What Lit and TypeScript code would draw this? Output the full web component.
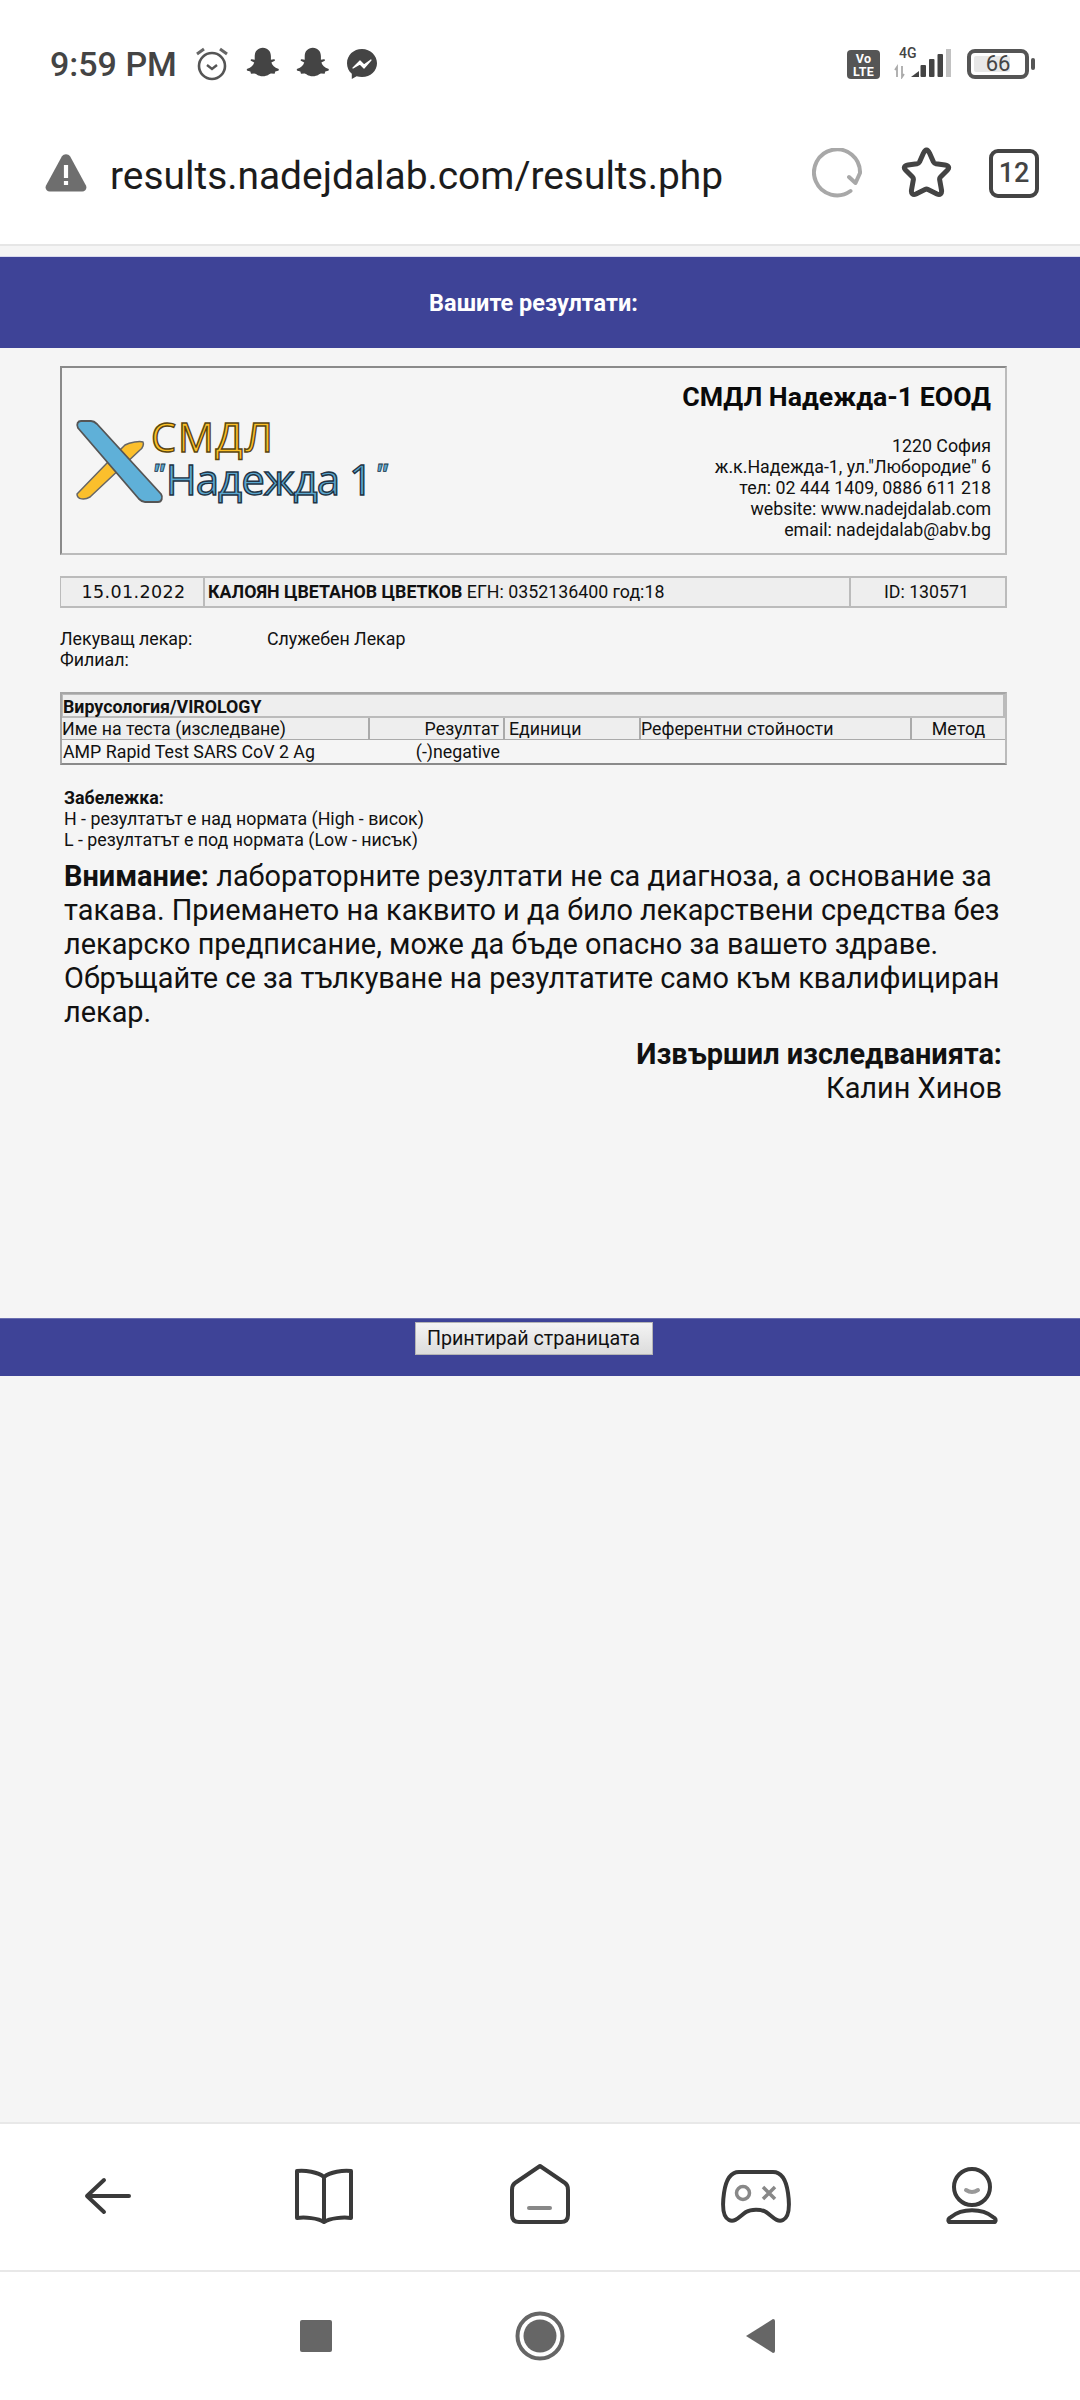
import { LitElement, html, css, svg } from "lit";
import { customElement } from "lit/decorators.js";

const ghost = svg`<path d="M12 2.500c-3 0-5 2.200-5 5.200v2.200l-1.800-.4c-.7 0-1 .8-.3 1.200l1.800.9c-.5 1.800-2 3.200-4.200 3.900-.6.2-.5 1 .1 1.200l1.700.5.4 1.300 2-.2c1.200 0 2.300 1.700 5.300 1.700s4.100-1.700 5.300-1.700l2 .2.4-1.300 1.700-.5c.6-.2.7-1 .1-1.200-2.200-.7-3.700-2.100-4.200-3.900l1.800-.9c.7-.4.4-1.200-.3-1.200l-1.800.4V7.700c0-3-2-5.200-5-5.200z" fill="#444"/>`;

@customElement("app-root")
export class AppRoot extends LitElement {
  static styles = css`
    :host { display: block; width: 1080px; height: 2400px; font-family: Roboto, "Noto Sans", sans-serif; color: #111; background: #f5f5f5; }
    .page { display: flex; flex-direction: column; height: 2400px; }
    svg { display: block; flex: none; }

    .top { background: #fff; border-bottom: 2px solid #e6e6e6; }
    .status { height: 130px; display: flex; align-items: center; padding: 0 45px 2px 50px; box-sizing: border-box; }
    .time { font-size: 34px; font-weight: 500; color: #444; margin-right: 18px; white-space: nowrap; }
    .sicons { display: flex; gap: 16px; align-items: center; }
    .sright { margin-left: auto; display: flex; align-items: center; }
    .volte { width: 33px; height: 29px; background: #555; color: #fff; border-radius: 4px; font-size: 12.5px; font-weight: 700; line-height: 13px; text-align: center; padding-top: 2px; box-sizing: border-box; margin-right: 14px; letter-spacing: .3px; }
    .sig { position: relative; width: 57px; height: 30px; margin-right: 16px; }
    .sig span { position: absolute; left: 5px; top: -4px; font-size: 14px; font-weight: 500; color: #444; }
    .batt { width: 62px; height: 30px; border: 4px solid #555; border-radius: 8px; box-sizing: border-box; position: relative; font-size: 22px; line-height: 22px; color: #444; text-align: center; }
    .batt i { position: absolute; left: 3px; top: 3px; bottom: 3px; width: 36px; background: #e8e8e8; border-radius: 2px; }
    .batt span { position: relative; }
    .cap { width: 4px; height: 12px; background: #555; border-radius: 2px; margin-left: 2px; }

    .url { height: 114px; display: flex; align-items: center; padding: 0 41px 28px 45px; box-sizing: border-box; }
    .addr { font-size: 38.900px; margin-left: 23px; padding-top: 5px; color: #1c1c1c; flex: 1; white-space: nowrap; }
    .ubtns { display: flex; align-items: center; }
    .tabs { width: 50px; height: 49px; border: 4px solid #444; border-radius: 9px; box-sizing: border-box; font-size: 27px; font-weight: 500; color: #444; display: flex; align-items: center; justify-content: center; margin-left: 37px; }
    .star { margin-left: 38px; }

    main { flex: 1; padding-top: 10px; }
    .band { background: #3e4397; height: 92px; display: flex; align-items: center; justify-content: center; color: #fff; font-weight: 700; font-size: 23.500px; padding-right: 13px; border-top: 1px solid #d8d9ee; box-sizing: border-box; }
    .doc { margin: 0 73px 0 60px; font-size: 17.800px; line-height: 21px; color: #111; }
    .head { margin-top: 18px; height: 189px; border: 2px solid; border-color: #8a8a8a #bbb #bbb #8a8a8a; box-sizing: border-box; display: flex; justify-content: space-between; padding: 0 14px 0 8px; }

    .logo { display: flex; align-items: flex-start; margin-top: 47px; height: 100px; }
    .mark { margin-right: -14px; }
    .wm { font-family: "Open Sans", sans-serif; padding-top: 2px; white-space: nowrap; }
    .wm1 { font-size: 40px; line-height: 40px; color: #fcc028; -webkit-text-stroke: 1.400px #5a4510; letter-spacing: 1.700px; }
    .wm2 { font-size: 42px; line-height: 44px; color: #5aa7cf; -webkit-text-stroke: 1.400px #234; letter-spacing: -1px; }
    .q { font-size: 28px; line-height: 0; font-style: italic; font-weight: 700; vertical-align: 10px; -webkit-text-stroke: .8px #234; letter-spacing: 0; }
    .q.a { margin-right: 1px; margin-left: 1px; }
    .q.b { margin-left: 3px; }

    .co { text-align: right; }
    .co h1 { margin: 13px 0 22px; font-size: 26.700px; line-height: 32px; font-weight: 700; color: #0a0a0a; }

    .info { margin-top: 21px; display: grid; grid-template-columns: 142px 646px 158px; height: 32px; background: #eee; border: solid #bbb; border-width: 2px 2px 2px 1px; box-sizing: border-box; align-items: center; line-height: 28px; }
    .info > div { height: 28px; border-left: 2px solid #bbb; padding-left: 3px; box-sizing: border-box; }
    .info > div:first-child { border-left: none; text-align: center; font-family: "DejaVu Sans", sans-serif; font-size: 17.500px; letter-spacing: .4px; padding: 0 0 0 3px; }
    .info > div:last-child { text-align: center; padding: 0 5px 0 0; }

    .doctor { margin-top: 20px; display: grid; grid-template-columns: 207px 1fr; }

    .tbl { margin-top: 22px; border: 2px solid; border-color: #a6a6a6 #bbb #8a8a8a #a6a6a6; box-sizing: border-box; height: 73px; }
    .sect { height: 24px; background: #eee; font-weight: 700; line-height: 23px; padding-left: 0; border: 1px solid #bbb; border-width: 1px 2px 2px 1px; box-sizing: border-box; }
    .row { display: grid; grid-template-columns: 308px 135px 136px 271px 1fr; }
    .row.h { height: 22px; background: #eee; border-bottom: 1px solid #aaa; box-sizing: border-box; }
    .row.h > div { border-right: 2px solid #aaa; line-height: 21px; }
    .row.h > div:last-child { border-right: none; }
    .row.d { height: 23px; line-height: 23px; padding-left: 1px; }
    .right { text-align: right; padding-right: 4px; }
    .ctr { text-align: center; }
    .pad { padding-left: 4px; }
    .neg { text-align: right; padding-right: 6px; }

    .note { margin: 22px 5px 0 4px; }
    .warn { font-size: 28.900px; line-height: 34px; margin-top: 9px; color: #111; }
    .sign { font-size: 28.900px; line-height: 34px; text-align: right; margin-top: 8px; color: #111; }

    .pband { margin-top: 213px; height: 58px; background: #3e4397; display: flex; justify-content: center; padding-right: 13px; align-items: flex-start; border-top: 1px solid #6a6eb0; box-sizing: border-box; }
    .pband button { margin-top: 3px; width: 238px; height: 33px; font: 19.700px/1 Roboto, sans-serif; color: #111; background: linear-gradient(#f4f4f4, #dcdcdc); border: 1px solid #b5b5b5; padding: 0; }

    .nav { background: #fff; border-top: 2px solid #e8e8e8; height: 148px; box-sizing: border-box; display: grid; grid-template-columns: repeat(5, 216px); justify-items: center; align-items: center; }
    .sys { background: #fff; border-top: 2px solid #e8e8e8; height: 130px; box-sizing: border-box; display: grid; grid-template-columns: 224px 224px 216px; justify-items: center; align-items: center; padding-left: 204px; }
    .sq { width: 32px; height: 32px; background: #666; border-radius: 2px; }
  `;

  render() {
    return html`<div class="page">
      <div class="top">
        <div class="status">
          <span class="time">9:59 PM</span>
          <div class="sicons">
            <svg width="34" height="36" viewBox="0 0 34 36" fill="none" stroke="#555"><circle cx="17" cy="20" r="13" stroke-width="2.600"/><path d="M12 19l5 4 5-4" stroke-width="2.400"/><path d="M2 8l7-5M32 8l-7-5" stroke-width="3" stroke="#666"/></svg>
            <svg width="34" height="34" viewBox="1 2 21 21">${ghost}</svg>
            <svg width="34" height="34" viewBox="1 2 21 21">${ghost}</svg>
            <svg width="34" height="34" viewBox="0 0 34 34"><path d="M17 2C8.500 2 2 8.200 2 16.300c0 4.300 1.800 8 4.800 10.500V32l4.800-2.700c1.700.5 3.500.8 5.400.8 8.500 0 15-6.200 15-13.800S25.500 2 17 2z" fill="#444"/><path d="M8 21l7-7 4 4 7-5-7 8-4-4z" fill="#fff" stroke="#fff" stroke-width="1.200" stroke-linejoin="round"/></svg>
          </div>
          <div class="sright">
            <div class="volte">Vo<br />LTE</div>
            <div class="sig"><span>4G</span>
              <svg width="57" height="30" viewBox="0 0 57 30"><path d="M3 28V18l-2 3M8 17v11l2-3" stroke="#aaa" stroke-width="1.800" fill="none"/><path d="M17 28l8-6v6z" fill="#444"/><rect x="26.500" y="16" width="5.500" height="12" rx="1" fill="#444"/><rect x="35" y="10" width="5.500" height="18" rx="1" fill="#444"/><rect x="43.500" y="5" width="5.500" height="23" rx="1" fill="#444"/><rect x="52" y="0" width="5" height="28" fill="#c2c2c2"/></svg>
            </div>
            <div class="batt"><i></i><span>66</span></div>
            <div class="cap"></div>
          </div>
        </div>
        <div class="url">
          <svg width="42" height="38" viewBox="0 0 40 38" preserveAspectRatio="none"><path d="M16 2.500c2-3 6-3 8 0l15 29c1.300 3-.5 6-3.500 6H4.500c-3 0-4.800-3-3.500-6z" fill="#6e6e6e"/><rect x="18" y="11" width="4" height="13" fill="#fff"/><rect x="18" y="27" width="4" height="4" fill="#fff"/></svg>
          <div class="addr">results.nadejdalab.com/results.php</div>
          <div class="ubtns">
            <svg width="50" height="50" viewBox="0 0 50 50" fill="none" stroke="#a8a8a8" stroke-width="4" stroke-linecap="round" stroke-linejoin="round"><path d="M38.500 43A23 23 0 1 1 48 25L43.500 35L37 29"/></svg>
            <svg class="star" width="52" height="52" viewBox="0 0 52 52" fill="none" stroke="#444" stroke-width="5" stroke-linejoin="round"><path d="M26 3c1.500 0 2.500 1 3.500 3l4 9c.5 1 1.500 1.500 2.500 1.700l9 1.300c4 .6 4.500 3 2.500 5l-7 7c-1 1-1 2-.8 3l1.800 10c.6 3.500-1.500 5.500-4.500 4l-9-4.500c-1-.5-2-.5-3 0l-9 4.500c-3 1.500-5-.5-4.500-4l1.800-10c.2-1 .2-2-.8-3l-7-7c-2-2-1.500-4.400 2.500-5l9-1.300c1-.2 2-.7 2.500-1.700l4-9c1-2 2-3 3.500-3z"/></svg>
            <div class="tabs">12</div>
          </div>
        </div>
      </div>

      <main>
        <div class="band">Вашите резултати:</div>
        <div class="doc">
          <div class="head">
            <div class="logo">
              <svg class="mark" width="95" height="100" viewBox="70 415 95 100">
                <path d="M77 494L107 463L125 445C130 442 140 441 143 442C144 444 143 448 140 450L90 497C85 500 77 500 77 494Z" fill="#fbbf2c" stroke="#666" stroke-width="1.500" stroke-linejoin="round"/>
                <path d="M78 428c-2-4 0-7 3-7h10c3 0 4 1 6 3l64 70c2 3 1 8-3 8h-13c-3 0-4-1-6-3z" fill="#5fb0d8" stroke="#555" stroke-width="1.800" stroke-linejoin="round"/>
              </svg>
              <div class="wm">
                <div class="wm1">СМДЛ</div>
                <div class="wm2"><span class="q a">"</span>Надежда 1<span class="q b">"</span></div>
              </div>
            </div>
            <div class="co">
              <h1>СМДЛ Надежда-1 ЕООД</h1>
              1220 София<br />ж.к.Надежда-1, ул."Любородие" 6<br />тел: 02 444 1409, 0886 611 218<br />website: www.nadejdalab.com<br />email: nadejdalab@abv.bg
            </div>
          </div>

          <div class="info">
            <div>15.01.2022</div>
            <div><b>КАЛОЯН ЦВЕТАНОВ ЦВЕТКОВ</b> ЕГН: 0352136400 год:18</div>
            <div>ID: 130571</div>
          </div>

          <div class="doctor">
            <div>Лекуващ лекар:</div><div>Служебен Лекар</div>
            <div>Филиал:</div><div></div>
          </div>

          <div class="tbl">
            <div class="sect">Вирусология/VIROLOGY</div>
            <div class="row h">
              <div>Име на теста (изследване)</div>
              <div class="right">Резултат</div>
              <div class="pad">Единици</div>
              <div>Референтни стойности</div>
              <div class="ctr">Метод</div>
            </div>
            <div class="row d">
              <div>AMP Rapid Test SARS CoV 2 Ag</div>
              <div class="neg">(-)negative</div>
            </div>
          </div>

          <div class="note">
            <b>Забележка:</b><br />
            H - резултатът е над нормата (High - висок)<br />
            L - резултатът е под нормата (Low - нисък)
            <div class="warn"><b>Внимание:</b> лабораторните резултати не са диагноза, а основание за такава. Приемането на каквито и да било лекарствени средства без лекарско предписание, може да бъде опасно за вашето здраве. Обръщайте се за тълкуване на резултатите само към квалифициран лекар.</div>
            <div class="sign"><b>Извършил изследванията:</b><br />Калин Хинов</div>
          </div>
        </div>
        <div class="pband"><button>Принтирай страницата</button></div>
      </main>

      <div class="nav">
        <svg width="100" height="80" viewBox="0 0 100 80" fill="none" stroke="#3a3a3a" stroke-width="4" stroke-linecap="round" stroke-linejoin="round"><path d="M31 39H71M46 23L29 39L46 55"/></svg>
        <svg width="100" height="80" viewBox="0 0 100 80" fill="none" stroke="#3a3a3a" stroke-width="4" stroke-linejoin="round"><path d="M50 20C44 15 31 13 23 14V61C31 60 44 61 50 65C56 61 69 60 77 61V14C69 13 56 15 50 20V65"/></svg>
        <svg width="100" height="80" viewBox="0 0 100 80" fill="none" stroke="#3a3a3a" stroke-width="4" stroke-linecap="round" stroke-linejoin="round"><path d="M50 9L75 26Q78 28 78 33V58Q78 65 71 65H29Q22 65 22 58V33Q22 28 25 26Z"/><path d="M39 51H60" stroke="#888"/></svg>
        <svg width="100" height="80" viewBox="0 0 100 80" fill="none" stroke="#3a3a3a" stroke-width="4" stroke-linejoin="round"><path d="M33 15H67C75 15 80 22 82 36C84 50 83 60 77 63C71 66 66 59 60 55C55 52 45 52 40 55C34 59 29 66 23 63C17 60 16 50 18 36C20 22 25 15 33 15Z"/><circle cx="37" cy="36" r="6.500" stroke="#888" stroke-width="3.500"/><path d="M57 30L69 42M69 30L57 42" stroke="#888" stroke-width="3.500"/></svg>
        <svg width="100" height="80" viewBox="0 0 100 80" fill="none" stroke="#3a3a3a" stroke-width="4" stroke-linecap="round" stroke-linejoin="round"><circle cx="50" cy="30" r="18"/><path d="M44 33Q50 37 56 33" stroke="#999"/><path d="M27 65Q25 62 29 60C40 51 60 51 71 60Q75 62 73 65Z"/></svg>
      </div>
      <div class="sys">
        <div class="sq"></div>
        <svg width="50" height="50" viewBox="0 0 50 50"><circle cx="25" cy="25" r="22.500" fill="none" stroke="#666" stroke-width="4"/><circle cx="25" cy="25" r="16.500" fill="#666"/></svg>
        <svg width="32" height="38" viewBox="0 0 32 38"><path d="M29 2L2 19L29 36Q31 36 31 34V4Q31 2 29 2Z" fill="#666"/></svg>
      </div>
    </div>`;
  }
}
